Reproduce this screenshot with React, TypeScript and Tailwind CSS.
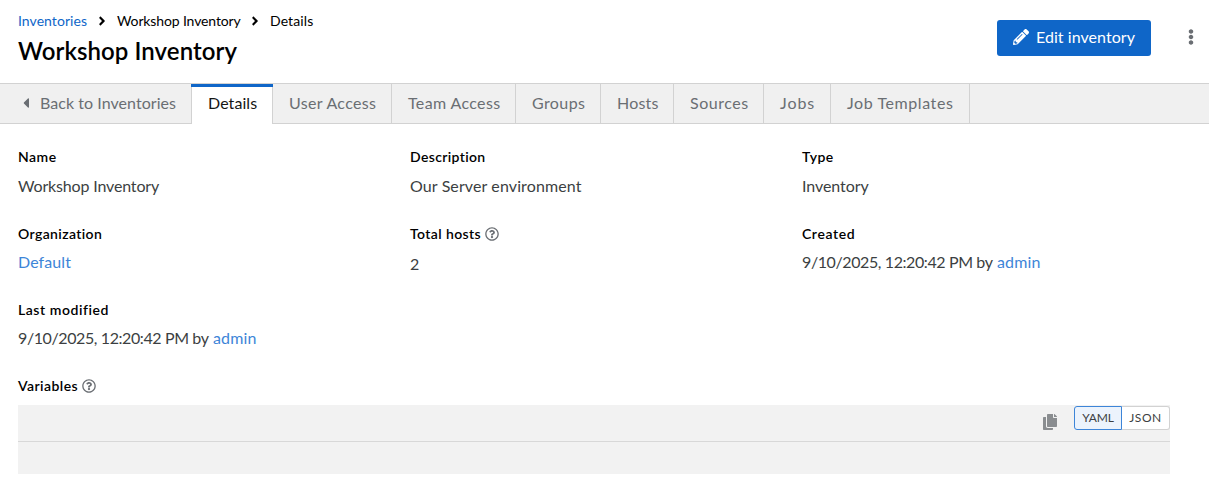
import type { ReactNode } from "react";
import {
  FaAngleRight,
  FaCaretLeft,
  FaCopy,
  FaEllipsisV,
  FaPencilAlt,
  FaRegQuestionCircle,
} from "react-icons/fa";

const tabs = [
  { label: "User Access", className: "w-[119px] tracking-[0.32px]" },
  { label: "Team Access", className: "w-[124px] tracking-[0.36px]" },
  { label: "Groups", className: "w-[85px] tracking-[0.4px]" },
  { label: "Hosts", className: "w-[73px] tracking-[0.2px]" },
  { label: "Sources", className: "w-[90px] tracking-[0.55px]" },
  { label: "Jobs", className: "w-[67px] tracking-[0.95px]" },
  { label: "Job Templates", className: "w-[139px] tracking-[0.58px]" },
];

function Detail({
  label,
  labelClass,
  help,
  className = "",
  children,
}: {
  label: string;
  labelClass: string;
  help?: boolean;
  className?: string;
  children?: ReactNode;
}) {
  return (
    <div className={`flex flex-col ${className}`}>
      <dt className="flex h-5 items-center gap-1 text-sm font-semibold text-black">
        <span className={labelClass}>{label}</span>
        {help && <FaRegQuestionCircle className="size-3.5 text-[#6a6e73]" />}
      </dt>
      {children && <dd className="whitespace-nowrap text-base leading-6 text-[#3c3f42]">{children}</dd>}
    </div>
  );
}

function Timestamp() {
  return (
    <div className="flex gap-1">
      <span className="w-[191px] tracking-[-0.4px]">9/10/2025, 12:20:42 PM by</span>
      <a className="tracking-[0.15px] text-[#3d85d8]">admin</a>
    </div>
  );
}

export default function App() {
  return (
    <div className="h-[488px] overflow-hidden bg-white font-['Lato','Noto_Sans',sans-serif] text-black">
      <header className="flex h-[83px] justify-between pl-[18px] pr-2.5">
        <div className="pt-[11px]">
          <nav className="flex h-5 items-center text-sm">
            <a className="w-[69px] tracking-[0.05px] text-[#0f66c8]">Inventories</a>
            <FaAngleRight className="mx-2 size-3.5" />
            <span className="w-[123px] whitespace-nowrap tracking-[-0.13px]">Workshop Inventory</span>
            <FaAngleRight className="mx-2 size-3.5" />
            <span className="tracking-[0.1px]">Details</span>
          </nav>
          <h1 className="mt-2 text-2xl font-semibold leading-6 tracking-[0.07px]">Workshop Inventory</h1>
        </div>
        <div className="mt-5 flex h-9 items-center gap-8">
          <button className="flex h-9 w-[154px] shrink-0 items-center gap-[7px] rounded-[3px] bg-[#0f66c8] pb-0.5 pl-4 text-base tracking-[0.05px] text-white">
            <FaPencilAlt className="size-4 shrink-0" />
            <span className="whitespace-nowrap">Edit inventory</span>
          </button>
          <FaEllipsisV className="mb-0.5 size-4 text-[#6a6e73]" />
        </div>
      </header>

      <nav className="flex h-[41px] border-t border-[#d2d2d2] bg-[#f0f0f0] text-base leading-[38px] text-[#6a6e73]">
        <div className="flex w-[192px] border-r border-b border-[#d2d2d2] pl-[18px]">
          <FaCaretLeft className="mt-[11px] mr-1.5 size-4" />
          <span className="whitespace-nowrap tracking-[0.05px]">Back to Inventories</span>
        </div>
        <div className="-ml-px w-[82px] border-t-[3px] border-t-[#0f66c8] bg-white">
          <div className="h-[37px] border-r border-l border-[#d2d2d2] pl-4 leading-[32px] tracking-[0.07px] text-[#151515]">
            Details
          </div>
        </div>
        {tabs.map((tab) => (
          <div key={tab.label} className={`whitespace-nowrap border-r border-b border-[#d2d2d2] pl-4 ${tab.className}`}>
            {tab.label}
          </div>
        ))}
        <div className="grow border-b border-[#d2d2d2]" />
      </nav>

      <main className="px-[18px] pt-[23px]">
        <dl className="grid grid-cols-[392px_392px_1fr]">
          <Detail label="Name" labelClass="tracking-[0.5px]" className="h-[77px] gap-[7px]">
            <span className="tracking-[-0.16px]">Workshop Inventory</span>
          </Detail>
          <Detail label="Description" labelClass="tracking-[0.35px]" className="h-[77px] gap-[7px]">
            <span className="tracking-[0.11px]">Our Server environment</span>
          </Detail>
          <Detail label="Type" labelClass="tracking-[0.5px]" className="h-[77px] gap-[7px]">
            <span className="tracking-[-0.06px]">Inventory</span>
          </Detail>
          <Detail label="Organization" labelClass="tracking-[0.38px]" className="h-[76px] gap-[6px]">
            <a className="tracking-[0.1px] text-[#3d85d8]">Default</a>
          </Detail>
          <Detail label="Total hosts" labelClass="tracking-[0.4px]" help className="h-[76px] gap-[8px]">
            2
          </Detail>
          <Detail label="Created" labelClass="tracking-[0.6px]" className="h-[76px] gap-[6px]">
            <Timestamp />
          </Detail>
          <Detail label="Last modified" labelClass="tracking-[0.55px]" className="h-[76px] gap-[6px]">
            <Timestamp />
          </Detail>
          <Detail label="Variables" labelClass="w-[60px] tracking-[0.45px]" help className="col-span-3 h-[29px]" />
        </dl>

        <section className="h-[69px] w-[1152px] bg-[#f2f2f2]">
          <div className="flex h-[37px] justify-end border-b border-[#d8d8d8]">
            <FaCopy className="mt-[9px] mr-4 size-4 text-[#8a8d90]" />
            <div className="mt-px flex h-6 text-xs leading-[22px] text-[#3c3f42]">
              <button className="w-12 rounded-l-[3px] border border-[#3d85d8] bg-[#ecf3fc] tracking-[-0.1px]">YAML</button>
              <button className="w-12 rounded-r-[3px] border border-l-0 border-[#d2d2d2] bg-white tracking-[0.6px]">
                JSON
              </button>
            </div>
          </div>
        </section>
      </main>
    </div>
  );
}
